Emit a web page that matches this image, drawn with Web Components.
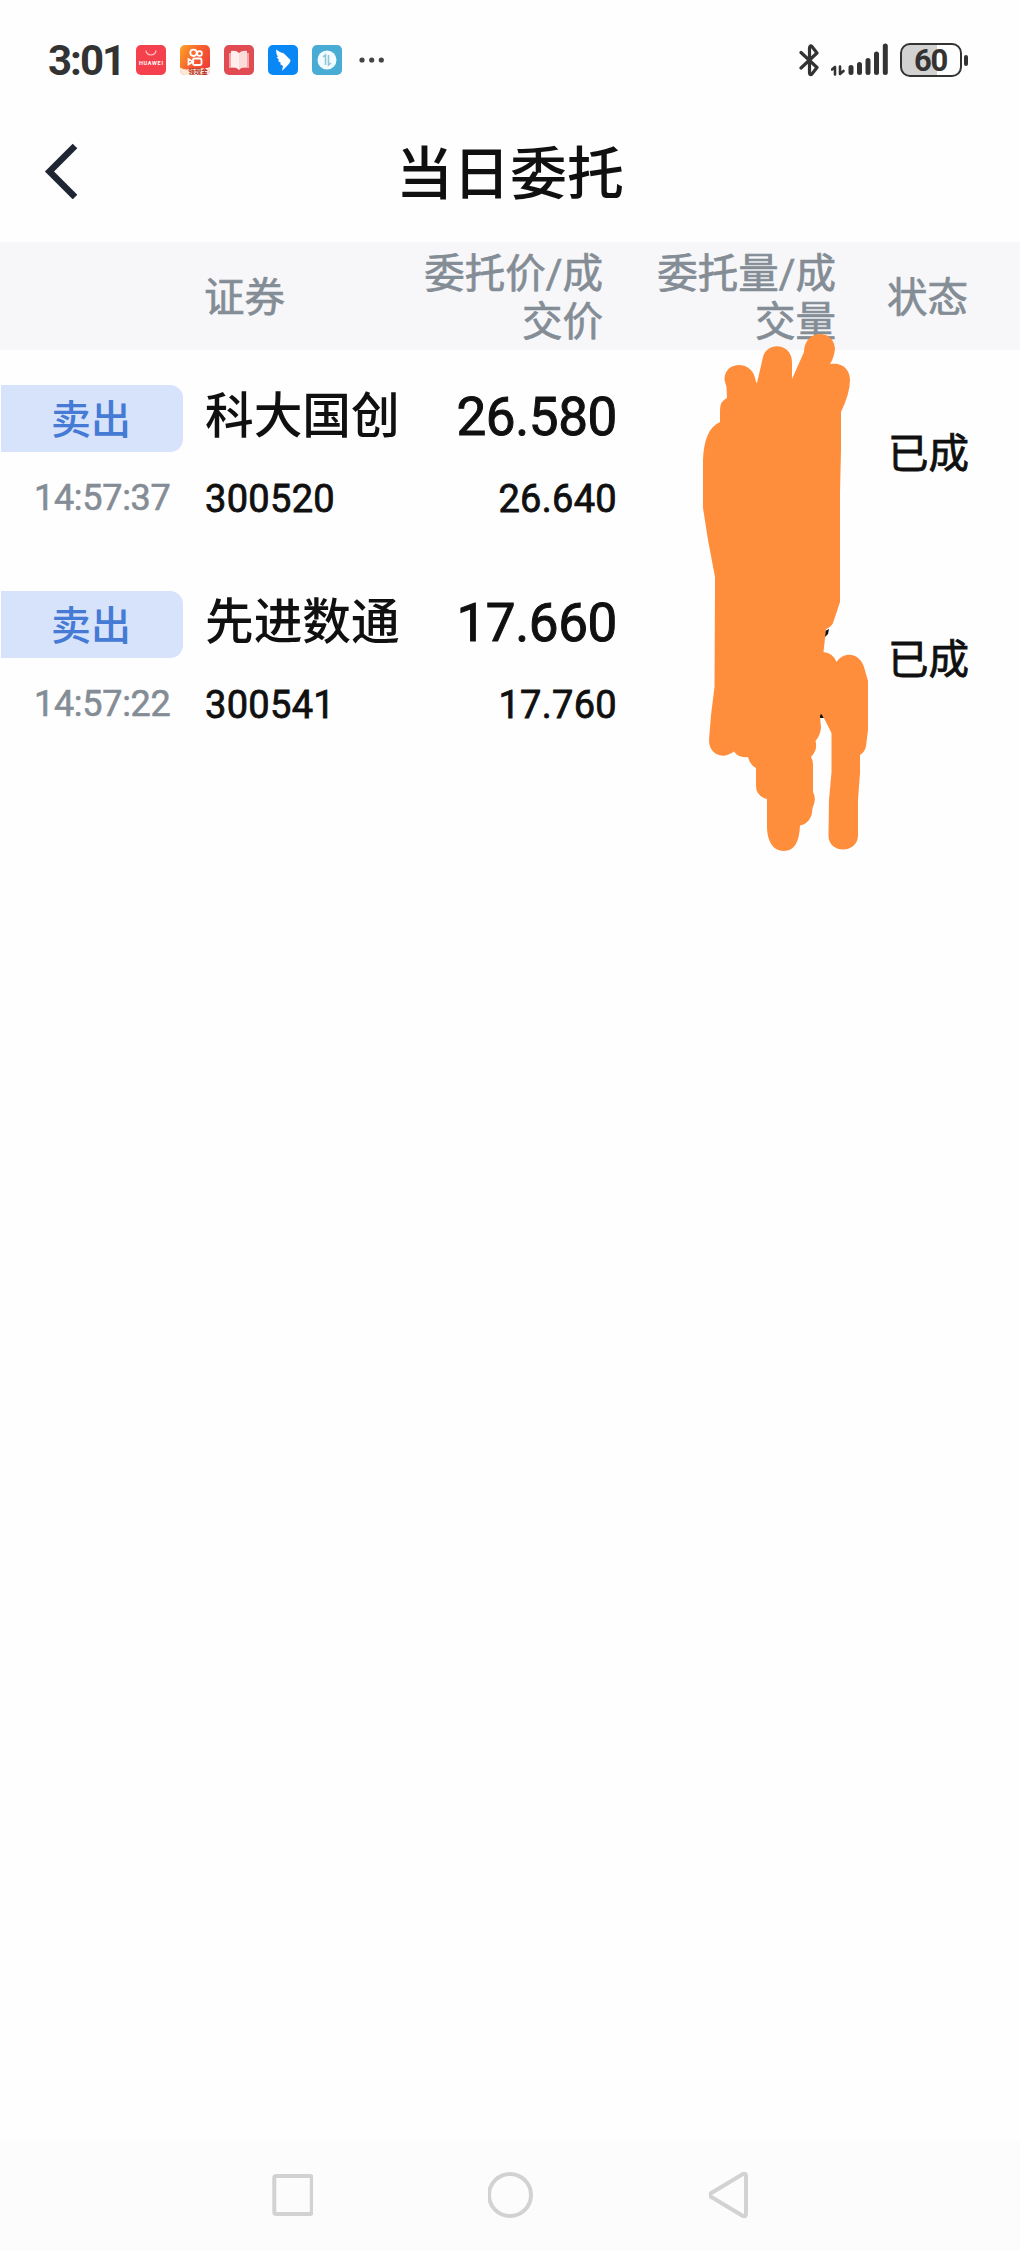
<!DOCTYPE html>
<html lang="zh-CN">
<head>
<meta charset="utf-8">
<title>当日委托</title>
<style>
  body {
    margin: 0;
    background: #fefefe;
    color: #101010;
    font-family: Roboto, "Noto Sans CJK SC", sans-serif;
    font-weight: 500;
  }
</style>
</head>
<body>
<orders-page></orders-page>
<script>
function define(name, html, setup) {
  customElements.define(name, class extends HTMLElement {
    constructor() {
      super();
      this.attachShadow({ mode: 'open' });
      const template = document.createElement('template')
      template.innerHTML = html;
      this.shadowRoot.appendChild(template.content.cloneNode(true))
    }

    connectedCallback() {
      if (setup) setup(this, this.shadowRoot);
    }
  })
}

define('status-bar', `
  <style>
    :host { display: flex; align-items: center; height: 120px; box-sizing: border-box; padding: 0 52px 0 48px; color: #333; }
    .time { width: 88px; font-size: 42px; font-weight: 700; line-height: 48px; padding-top: 2px; letter-spacing: -2px; }
    .apps { display: flex; gap: 14px; }
    svg { display: block; flex: none; }
    .dots { margin-left: 17px; }
    .spacer { flex: 1; }
    .signal { margin-left: 12px; }
    .battery { display: flex; align-items: center; margin-left: 11px; gap: 2px; }
    .cell { width: 62px; height: 34px; box-sizing: border-box; border: 2.5px solid #333; border-radius: 10px; background: linear-gradient(90deg, #d2d2d2 35px, transparent 35px); text-align: center; font-size: 31px; font-weight: 700; line-height: 31px; letter-spacing: -1.2px; text-indent: -1px; }
    .cap { width: 4px; height: 11px; border-radius: 2px; background: #333; }
  </style>
  <span class="time">3:01</span>
  <div class="apps">
    <svg width="30" height="30" viewBox="0 0 30 30">
      <rect width="30" height="30" rx="5" fill="#f5414d"/>
      <path d="M10 5.500a5 4.500 0 0 0 10 0" fill="none" stroke="#ffc4c4" stroke-width="1.200"/>
      <text x="15" y="19.500" text-anchor="middle" font-size="5.500" font-weight="700" textLength="24" fill="#fff">HUAWEI</text>
    </svg>
    <svg width="30" height="30" viewBox="0 0 30 30">
      <defs><linearGradient id="g" x1="0" y1="0" x2="1" y2="0.600"><stop offset="0" stop-color="#fba524"/><stop offset="0.550" stop-color="#f7602f"/><stop offset="1" stop-color="#ee4037"/></linearGradient></defs>
      <rect width="30" height="30" rx="5" fill="url(#g)"/>
      <g fill="none" stroke="#fff" stroke-width="1.800">
        <circle cx="13.500" cy="7.800" r="3.200"/><circle cx="19.500" cy="8.500" r="2.400"/>
        <rect x="13" y="13.500" width="8.500" height="6.500" rx="1.500"/><path d="M13 16.700l-4.500-2.700v5.500z"/>
      </g>
      <path d="M0 22.500q5 3 9 1.500l18-1 3-1v3a5 5 0 0 1-5 5H5a5 5 0 0 1-5-5z" fill="#fee9d8"/>
      <text x="18" y="29" text-anchor="middle" font-size="6.500" font-weight="700" fill="#b52b1b">领现金</text>
    </svg>
    <svg width="30" height="30" viewBox="0 0 30 30">
      <rect width="30" height="30" rx="5" fill="#e14b52"/>
      <path d="M5 8h20v15H5z" fill="#f4a5a5"/>
      <path d="M15 8q-3-3-8-2v16q5-.5 8 3z" fill="#fff0ed"/>
      <path d="M15 8q3-3 8-2v16q-5-.5-8 3z" fill="#fcdcd9"/>
    </svg>
    <svg width="30" height="30" viewBox="0 0 30 30">
      <rect width="30" height="30" rx="5" fill="#0988f5"/>
      <path d="M8 4.500Q11 7 16 8.500L22.500 15q0 3-4.500 7l-4 4 1-5-3-2 1-1-3-2 1-1-2.500-3h1.500Q8 9 8 4.500z" fill="#fff"/>
    </svg>
    <svg width="30" height="30" viewBox="0 0 30 30">
      <rect width="30" height="30" rx="5" fill="#49acd5"/>
      <circle cx="15" cy="15" r="9.500" fill="#f2fbfd"/>
      <path d="M11 12l2.500-2v10M16.500 10v10l2.500-2" fill="none" stroke="#91c5d9" stroke-width="1.600"/>
    </svg>
  </div>
  <svg class="dots" width="26" height="6" viewBox="0 0 26 6" fill="#444">
    <circle cx="3" cy="3" r="2.600"/><circle cx="12.700" cy="3" r="2.600"/><circle cx="22.300" cy="3" r="2.600"/>
  </svg>
  <div class="spacer"></div>
  <svg width="20" height="34" viewBox="0 0 20 34" fill="none" stroke="#333" stroke-width="3.200" stroke-linecap="round" stroke-linejoin="round">
    <path d="M2 9.500l16 15-5.500 7q-2 .5-2-2v-24q0-3 2-2.500L18 10 2 25"/>
  </svg>
  <svg class="signal" width="58" height="34" viewBox="0 0 58 34" fill="none" stroke="#333" stroke-linecap="round">
    <path d="M1 26.500l3-2.500v7.500M9 23.500v7.500l3.500-3" stroke-width="2.600" stroke-linejoin="round"/>
    <path d="M20 24.500v5M28.500 21.500v8M37 17.500v12M45.500 11v18.500M54.300 3v26.500" stroke-width="5"/>
  </svg>
  <div class="battery"><div class="cell">60</div><div class="cap"></div></div>
`)

define('title-bar', `
  <style>
    :host { display: grid; grid-template-columns: 120px 1fr 120px; align-items: center; height: 122px; }
    svg { display: block; margin-left: 44px; margin-bottom: 21px; }
    h1 { margin: 0 0 12px; text-align: center; font-size: 57px; line-height: 80px; font-weight: 500; }
  </style>
  <svg width="34" height="56" viewBox="0 0 34 56"><path d="M31 3L5.500 28.500 31 54" fill="none" stroke="#202533" stroke-width="6.500"/></svg>
  <h1><slot></slot></h1>
`)

define('table-head', `
  <style>
    :host { display: grid; grid-template-columns: 204px 399px 233px 132px; align-items: center; height: 108px; box-sizing: border-box; padding-top: 3px; background: #f7f7fa; color: #848d95; font-size: 40.500px; line-height: 48px; font-weight: 400; -webkit-text-stroke: 0.7px; }
    .security { display: grid; grid-template-columns: 1fr 198px; align-items: center; grid-column: 2; }
    div { text-align: right; }
    .name { text-align: left; }
  </style>
  <div class="security"><div class="name">证券</div><div>委托价/成<br>交价</div></div>
  <div>委托量/成<br>交量</div>
  <div>状态</div>
`)

define('order-row', `
  <style>
    :host { display: grid; grid-template-columns: 205px 206px 206px 352px; height: 206px; box-sizing: border-box; padding-top: 35px; }
    .side { display: flex; flex-direction: column; }
    .badge { width: 182px; height: 67px; margin-left: 1px; box-sizing: border-box; padding-right: 2px; border-radius: 0 13px 13px 0; background: #d7e3fb; color: #457ad5; text-align: center; font-size: 40px; line-height: 71px; }
    .time { margin-top: 25px; padding-left: 34px; color: #848d95; font-size: 36px; line-height: 42px; font-weight: 400; letter-spacing: -0.300px; -webkit-text-stroke: 0.6px; }
    .name { font-size: 48.700px; line-height: 64px; }
    .code, .deal { margin-top: 28px; font-size: 38px; line-height: 44px; font-weight: 400; letter-spacing: 0.300px; -webkit-text-stroke: 0.8px; }
    .price { text-align: right; font-size: 53px; line-height: 64px; font-weight: 400; letter-spacing: -0.400px; -webkit-text-stroke: 1px; }
    .deal { text-align: right; }
    .state { margin-top: 39px; text-align: right; font-size: 40.500px; line-height: 60px; font-weight: 400; -webkit-text-stroke: 0.8px; }
  </style>
  <div class="side"><div class="badge">卖出</div><div class="time"></div></div>
  <div><div class="name"></div><div class="code"></div></div>
  <div><div class="price"></div><div class="deal"></div></div>
  <div class="state">已成</div>
`, (host, root) => {
  for (const key of ['time', 'name', 'code', 'price', 'deal']) {
    root.querySelector('.' + key).textContent = host.getAttribute(key);
  }
})

// freehand marker over the volume column
define('marker-scribble', `
  <style>
    :host { display: block; position: absolute; left: 700px; top: 330px; }
    svg { display: block; }
  </style>
  <svg width="172" height="525" viewBox="700 330 172 525">
    <path d="M825 631l4-2-1 5-3 3zM819 714h4l1 4h-4z" fill="#101010"/>
    <path fill="#ff8e3c" d="M724.500 380C724 361 751 360 755 378Q756 383 757 383L763 357C767 341 792 343 792 362V379L804 352C804 329 834 328 835 349Q834 358 830 364C842 362 850 369 850 380Q850 393 841 412V450L840 492V602L833 623Q831 627 826 629L823.500 652Q833 653 836.500 662C845 650 860 654 864 667L868 681V730L866 746Q865 752 860 755V773L858 800V836C857 854 829 854 828.500 836L829 800 831.500 772V733L825 720 821 713.500 820 716 821 728Q820 736 815.500 741 818 750 811 757 813 760 813 764V792Q817 799 812.500 808 812 823 800 825.500 799 851 784 851C770 851 767 836 767 826V799Q756 796 756 786V768Q750 765 748 757 738 758 734 751.500C723 760 709 755 709 740L711 715 714.500 687 715 590V577L708 540 703 508V460Q704 429 720 422V410Q720 401 727 398L726.500 387z"/>
  </svg>
`)

define('nav-bar', `
  <style>
    :host { display: flex; align-items: center; justify-content: space-between; height: 110px; box-sizing: border-box; padding: 0 269px 0 271px; background: #fcfcfc; }
    svg { display: block; fill: none; stroke: #d2d2d2; stroke-width: 4; stroke-linejoin: round; }
  </style>
  <svg width="42" height="46" viewBox="0 0 42 46"><rect x="3.300" y="4" width="37.500" height="38" rx="2"/></svg>
  <svg width="46" height="46" viewBox="0 0 46 46"><circle cx="22" cy="23" r="21"/></svg>
  <svg width="42" height="46" viewBox="0 0 42 46"><path d="M1.500 21.500Q0 23 1.500 24.500L34 44Q37 45 37 42V4Q37 1 34 2z"/></svg>
`)

define('orders-page', `
  <style>
    :host { position: relative; display: flex; flex-direction: column; width: 1020px; height: 2250px; overflow: hidden; }
    main { flex: 1; }
  </style>
  <status-bar></status-bar>
  <title-bar>当日委托</title-bar>
  <main>
    <table-head></table-head>
    <order-row time="14:57:37" name="科大国创" code="300520" price="26.580" deal="26.640"></order-row>
    <order-row time="14:57:22" name="先进数通" code="300541" price="17.660" deal="17.760"></order-row>
  </main>
  <nav-bar></nav-bar>
  <marker-scribble></marker-scribble>
`)
</script>
</body>
</html>
